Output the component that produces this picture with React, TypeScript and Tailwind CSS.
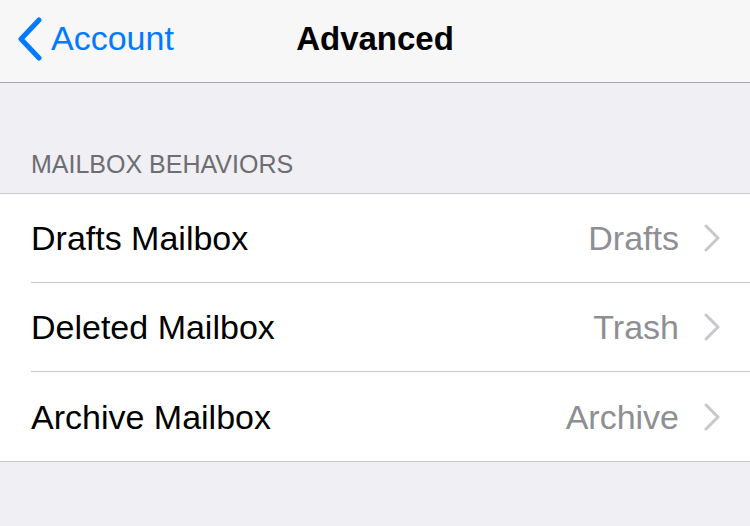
const rows = [
  { label: "Drafts Mailbox", value: "Drafts" },
  { label: "Deleted Mailbox", value: "Trash" },
  { label: "Archive Mailbox", value: "Archive" },
];

function Chevron() {
  return (
    <svg width="18" height="28" viewBox="0 0 18 28" className="shrink-0">
      <path d="M3 2 L15 14 L3 26" fill="none" stroke="#c7c7cc" strokeWidth="3" strokeLinecap="round" strokeLinejoin="round" />
    </svg>
  );
}

export default function App() {
  return (
    <div className="w-[750px] h-[526px] bg-[#efeff4] overflow-hidden" style={{ fontFamily: '"Liberation Sans", Arial, sans-serif' }}>
      <div className="relative h-[83px] bg-[#f7f7f7] border-b border-[#a8a8ab] flex items-center justify-center pb-[6px]">
        <div className="absolute left-[16px] top-0 bottom-[4px] flex items-center gap-[7px] text-[#007aff]">
          <svg width="28" height="44" viewBox="0 0 28 44">
            <path d="M23 3 L5 22 L23 41" fill="none" stroke="#007aff" strokeWidth="5" strokeLinecap="round" strokeLinejoin="round" />
          </svg>
          <span className="text-[34px] leading-none pb-[3px]">Account</span>
        </div>
        <span className="text-[33px] font-bold text-black leading-none">Advanced</span>
      </div>

      <div className="h-[110px] flex items-end px-[31px] pb-[14px]">
        <span className="text-[25px] leading-[30px] text-[#6d6d72] uppercase">Mailbox Behaviors</span>
      </div>

      <div className="bg-white border-t border-b border-[#c8c7cc]">
        {rows.map((row, i) => (
          <div key={row.label} className="pl-[31px]">
            <div className={"h-[89px] flex items-center pr-[29px] " + (i < rows.length - 1 ? "border-b border-[#c8c7cc]" : "")}>
              <span className="flex-1 text-[34px] text-black leading-none">{row.label}</span>
              <span className="text-[34px] text-[#8e8e93] leading-none mr-[24px]">{row.value}</span>
              <Chevron />
            </div>
          </div>
        ))}
      </div>
    </div>
  );
}
